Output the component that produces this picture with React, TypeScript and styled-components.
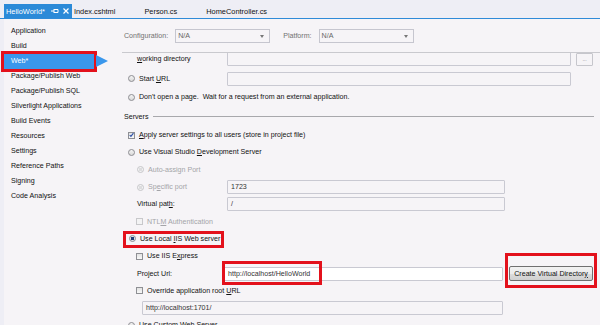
import React from "react";
import styled, { createGlobalStyle, css } from "styled-components";

const GlobalStyle = createGlobalStyle`
  html, body { margin: 0; padding: 0; }
  body {
    background: #f6f4f7;
    font-family: "Liberation Sans", Arial, sans-serif;
  }
`;

const Window = styled.div`
  width: 600px;
  height: 325px;
  overflow: hidden;
  display: flex;
  flex-direction: column;
  background: #eeeef5;
  font-size: 7.1px;
  color: #111;
`;

const TabBar = styled.div`
  height: 18px;
  flex: none;
  display: flex;
  align-items: flex-end;
  padding-left: 4px;
  border-bottom: 1px solid #2f8bd8;
`;

const Tab = styled.div<{ $active?: boolean }>`
  height: 14px;
  display: flex;
  align-items: center;
  gap: 5px;
  padding: 0 27px 0 2px;
  color: #111;
  font-size: 7.4px;
  ${(p) =>
    p.$active &&
    css`
      background: #2b8ad8;
      color: #fff;
      padding: 0 3px 0 2px;
    `}
`;

const TabIcons = styled.span`
  display: flex;
  align-items: center;
  gap: 4px;
  margin-left: 1px;
`;

const Body = styled.div`
  flex: 1;
  min-height: 0;
  display: flex;
  padding-left: 4px;
`;

const Page = styled.div`
  flex: 1;
  display: flex;
  background: #f6f4f7;
`;

const Nav = styled.nav`
  width: 118px;
  flex: none;
  padding: 4.5px 0 0 0;
  box-sizing: border-box;
`;

const NavItem = styled.div<{ $active?: boolean }>`
  position: relative;
  width: 90px;
  height: 15px;
  line-height: 15px;
  padding-left: 7px;
  box-sizing: border-box;
  white-space: nowrap;
  ${(p) =>
    p.$active &&
    css`
      background: #3a97ec;
      color: #fff;
      outline: 3px solid #e3111c;
      &::after {
        content: "";
        position: absolute;
        left: calc(100% + 2px);
        top: 1.5px;
        border-left: 12px solid #3a97ec;
        border-top: 6px solid transparent;
        border-bottom: 6px solid transparent;
      }
    `}
`;

const Main = styled.main`
  flex: 1;
  min-width: 0;
  display: flex;
  flex-direction: column;
`;

const ConfigRow = styled.div`
  height: 33px;
  flex: none;
  display: flex;
  align-items: center;
  padding-left: 2px;
  border-bottom: 1px solid #c9c9ce;
  color: #717171;
`;

const Dropdown = styled.div`
  position: relative;
  width: 95px;
  height: 14px;
  margin: 0 13px 0 7px;
  box-sizing: border-box;
  border: 1px solid #c6c6cf;
  padding-left: 2px;
  display: flex;
  align-items: center;
  color: #666;
  &::after {
    content: "";
    position: absolute;
    right: 5px;
    top: 5px;
    border-top: 3px solid #777;
    border-left: 2.5px solid transparent;
    border-right: 2.5px solid transparent;
  }
`;

const Viewport = styled.div`
  flex: 1;
  min-height: 0;
  overflow: hidden;
`;

const Content = styled.div`
  margin-top: -4px;
  padding: 0 6px 0 6px;
`;

const Row = styled.div<{ $h?: number; $indent?: number }>`
  height: ${(p) => p.$h ?? 17.3}px;
  padding-left: ${(p) => p.$indent ?? 0}px;
  display: flex;
  align-items: center;
  white-space: nowrap;
`;

const SectionHead = styled.div`
  height: 20px;
  margin-left: -4px;
  display: flex;
  align-items: center;
  gap: 5px;
  &::after {
    content: "";
    flex: 1;
    height: 1px;
    background: #a8a8ac;
  }
`;

const Option = styled.label<{ $w?: number; $muted?: boolean }>`
  position: relative;
  display: inline-flex;
  align-items: center;
  gap: 4px;
  width: ${(p) => (p.$w ? `${p.$w}px` : "auto")};
  flex: none;
  color: ${(p) => (p.$muted ? "#a4a4a8" : "#111")};
`;

const FieldLabel = styled.span<{ $w: number }>`
  width: ${(p) => p.$w}px;
  flex: none;
`;

const Radio = styled.span<{ $on?: boolean; $off?: boolean }>`
  width: 7px;
  height: 7px;
  flex: none;
  border-radius: 50%;
  box-sizing: border-box;
  border: 1px solid ${(p) => (p.$off ? "#c6c6c9" : "#8d8d92")};
  background: ${(p) =>
    p.$on
      ? "radial-gradient(circle, #1f3f78 0 1.6px, #dfe3ea 2px)"
      : p.$off
      ? "radial-gradient(circle, #dcdcde 0 1.4px, #f2f2f3 1.8px)"
      : "linear-gradient(#f4f4f4, #d9d9d9)"};
`;

const Check = styled.span<{ $on?: boolean; $off?: boolean }>`
  width: 7px;
  height: 7px;
  flex: none;
  box-sizing: border-box;
  border: 1px solid ${(p) => (p.$off ? "#c8c8cb" : "#8e8f94")};
  background: ${(p) => (p.$off ? "#f3f3f4" : "linear-gradient(#e2e2e2, #f8f8f8)")};
  display: flex;
  align-items: center;
  justify-content: center;
`;

const TextBox = styled.div<{ $w: number; $white?: boolean }>`
  position: relative;
  width: ${(p) => p.$w}px;
  height: 14px;
  flex: none;
  box-sizing: border-box;
  border: 1px solid #c9c9d2;
  border-radius: 1px;
  background: ${(p) => (p.$white ? "#ffffff" : "#f6f4f7")};
  padding-left: 3px;
  display: flex;
  align-items: center;
  color: #333;
`;

const SmallButton = styled.div`
  width: 17px;
  height: 13px;
  margin-left: 5px;
  box-sizing: border-box;
  border: 1px solid #c6c6cc;
  border-radius: 1px;
  display: flex;
  align-items: flex-end;
  justify-content: center;
  padding-bottom: 3px;
  font-size: 5px;
  color: #777;
`;

const PushButton = styled.div`
  position: relative;
  width: 84px;
  height: 15px;
  margin-left: 6px;
  box-sizing: border-box;
  border: 1px solid #707070;
  border-radius: 2px;
  background: linear-gradient(#f2f2f2 0%, #ebebeb 50%, #dddddd 51%, #cfcfcf 100%);
  display: flex;
  align-items: center;
  justify-content: center;
  color: #111;
`;

const Mark = styled.span<{ $t: number; $l: number; $w: number; $h: number }>`
  position: absolute;
  top: ${(p) => p.$t}px;
  left: ${(p) => p.$l}px;
  width: ${(p) => p.$w}px;
  height: ${(p) => p.$h}px;
  box-sizing: border-box;
  border: 3px solid #e3111c;
  pointer-events: none;
`;

const PinIcon = () => (
  <svg width="8" height="6" viewBox="0 0 8 6">
    <path d="M0 3h3M3 1v4M3 1.5h4v3H3" stroke="#fff" strokeWidth="1" fill="none" />
  </svg>
);

const CloseIcon = () => (
  <svg width="6" height="6" viewBox="0 0 6 6">
    <path d="M0.5 0.5l5 5M5.5 0.5l-5 5" stroke="#fff" strokeWidth="1.2" />
  </svg>
);

const Tick = () => (
  <svg width="6" height="6" viewBox="0 0 6 6">
    <path d="M0.8 3l1.5 1.6L5.3 0.8" stroke="#2b4fa8" strokeWidth="1.3" fill="none" />
  </svg>
);

const navItems = [
  "Application",
  "Build",
  "Web*",
  "Package/Publish Web",
  "Package/Publish SQL",
  "Silverlight Applications",
  "Build Events",
  "Resources",
  "Settings",
  "Reference Paths",
  "Signing",
  "Code Analysis",
];

export default function App() {
  return (
    <>
      <GlobalStyle />
      <Window>
        <TabBar>
          <Tab $active>
            HelloWorld*
            <TabIcons>
              <PinIcon />
              <CloseIcon />
            </TabIcons>
          </Tab>
          <Tab>Index.cshtml</Tab>
          <Tab>Person.cs</Tab>
          <Tab>HomeController.cs</Tab>
        </TabBar>
        <Body>
          <Page>
            <Nav>
              {navItems.map((item) => (
                <NavItem key={item} $active={item === "Web*"}>
                  {item}
                </NavItem>
              ))}
            </Nav>
            <Main>
              <ConfigRow>
                Configuration:
                <Dropdown>N/A</Dropdown>
                Platform:
                <Dropdown>N/A</Dropdown>
              </ConfigRow>
              <Viewport>
                <Content>
                  <Row $h={20.5} $indent={9}>
                    <FieldLabel $w={90}>
                      <u>w</u>orking directory
                    </FieldLabel>
                    <TextBox $w={344} />
                    <SmallButton>...</SmallButton>
                  </Row>
                  <Row $h={18.5}>
                    <Option $w={99}>
                      <Radio />
                      <span>
                        Start <u>U</u>RL
                      </span>
                    </Option>
                    <TextBox $w={344} />
                  </Row>
                  <Row $h={18.5}>
                    <Option>
                      <Radio />
                      Don't open a page.&nbsp; Wait for a request from an external application.
                    </Option>
                  </Row>
                  <SectionHead>Servers</SectionHead>
                  <Row $indent={0}>
                    <Option>
                      <Check>
                        <Tick />
                      </Check>
                      <span>
                        <u>A</u>pply server settings to all users (store in project file)
                      </span>
                    </Option>
                  </Row>
                  <Row>
                    <Option>
                      <Radio />
                      <span>
                        Use Visual Studio <u>D</u>evelopment Server
                      </span>
                    </Option>
                  </Row>
                  <Row $indent={9}>
                    <Option $muted>
                      <Radio $off />
                      Auto-assign Port
                    </Option>
                  </Row>
                  <Row $indent={9}>
                    <Option $muted $w={90}>
                      <Radio $off />
                      <span>
                        Sp<u>e</u>cific port
                      </span>
                    </Option>
                    <TextBox $w={278}>1723</TextBox>
                  </Row>
                  <Row $indent={9}>
                    <FieldLabel $w={90}>
                      Virtual pat<u>h</u>:
                    </FieldLabel>
                    <TextBox $w={278}>/</TextBox>
                  </Row>
                  <Row $indent={8}>
                    <Option $muted>
                      <Check $off />
                      <span>
                        NTL<u>M</u> Authentication
                      </span>
                    </Option>
                  </Row>
                  <Row $indent={1}>
                    <Option>
                      <Radio $on />
                      <span>
                        Use Local <u>I</u>IS Web server
                      </span>
                      <Mark $t={-4} $l={-6} $w={101} $h={17} />
                    </Option>
                  </Row>
                  <Row $indent={8}>
                    <Option>
                      <Check />
                      <span>
                        Use IIS E<u>x</u>press
                      </span>
                    </Option>
                  </Row>
                  <Row $indent={9}>
                    <FieldLabel $w={87}>Project Url:</FieldLabel>
                    <TextBox $w={279} $white>
                      http://localhost/HelloWorld
                      <Mark $t={-7} $l={-3} $w={100} $h={24} />
                    </TextBox>
                    <PushButton>
                      <span>
                        Create Virtual Director<u>y</u>
                      </span>
                      <Mark $t={-14} $l={-5} $w={92} $h={35} />
                    </PushButton>
                  </Row>
                  <Row $indent={8}>
                    <Option>
                      <Check />
                      <span>
                        Override application root <u>U</u>RL
                      </span>
                    </Option>
                  </Row>
                  <Row $indent={14}>
                    <TextBox $w={361}>http://localhost:1701/</TextBox>
                  </Row>
                  <Row>
                    <Option>
                      <Radio />
                      Use Custom Web Server
                    </Option>
                  </Row>
                </Content>
              </Viewport>
            </Main>
          </Page>
        </Body>
      </Window>
    </>
  );
}
